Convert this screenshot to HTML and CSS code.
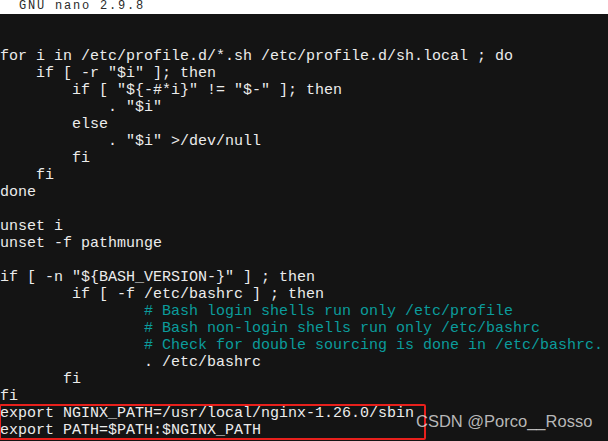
FILE: index.html
```html
<!DOCTYPE html>
<html lang="en">
<head>
    <meta charset="UTF-8">
    <title>GNU nano 2.9.8</title>
    <link rel="stylesheet" href="styles.css">
</head>
<body>

    <div class="terminal">
        <div class="titlebar">  GNU nano 2.9.8</div>

        <div class="buffer">
            <div class="ln">for i in /etc/profile.d/*.sh /etc/profile.d/sh.local ; do</div>
            <div class="ln">    if [ -r "$i" ]; then</div>
            <div class="ln">        if [ "${-#*i}" != "$-" ]; then</div>
            <div class="ln">            . "$i"</div>
            <div class="ln">        else</div>
            <div class="ln">            . "$i" &gt;/dev/null</div>
            <div class="ln">        fi</div>
            <div class="ln">    fi</div>
            <div class="ln">done</div>
            <div class="ln"></div>
            <div class="ln">unset i</div>
            <div class="ln">unset -f pathmunge</div>
            <div class="ln"></div>
            <div class="ln">if [ -n "${BASH_VERSION-}" ] ; then</div>
            <div class="ln">        if [ -f /etc/bashrc ] ; then</div>
            <div class="ln">                <span class="comment"># Bash login shells run only /etc/profile</span></div>
            <div class="ln">                <span class="comment"># Bash non-login shells run only /etc/bashrc</span></div>
            <div class="ln">                <span class="comment"># Check for double sourcing is done in /etc/bashrc.</span></div>
            <div class="ln">                . /etc/bashrc</div>
            <div class="ln">       fi</div>
            <div class="ln">fi</div>
            <div class="mark">
                <div class="ln">export NGINX_PATH=/usr/local/nginx-1.26.0/sbin</div>
                <div class="ln">export PATH=$PATH:$NGINX_PATH</div>
            </div>
        </div>

        <div class="watermark">CSDN @Porco__Rosso</div>
    </div>

</body>
</html>
```

FILE: styles.css
```css
html, body {
    margin: 0;
    padding: 0;
    background-color: #141414;
}
.terminal {
    position: relative;
    width: 608px;
    height: 441px;
    overflow: hidden;
    background-color: #141414;
    font-family: "Liberation Mono", "DejaVu Sans Mono", monospace;
}
.titlebar {
    height: 14px;
    line-height: 13px;
    padding-left: 1px;
    font-size: 12px;
    letter-spacing: 1.8px;
    background-color: #ffffff;
    color: #2a2a2a;
    white-space: pre;
}
.buffer {
    padding-top: 34px;
    font-size: 15px;
    color: #ececec;
}
.ln {
    height: 17px;
    line-height: 17px;
    white-space: pre;
}
.comment {
    color: #0b9c9c;
}
.mark {
    position: relative;
    width: 426px;
}
.mark::after {
    content: "";
    position: absolute;
    left: -1px;
    top: -1px;
    right: 0;
    bottom: -1px;
    border: 2px solid #e8201c;
    border-radius: 2px;
}
.watermark {
    position: absolute;
    left: 416px;
    top: 412px;
    font-family: "Liberation Sans", Arial, sans-serif;
    font-size: 16.5px;
    color: rgba(215, 215, 215, 0.85);
    white-space: nowrap;
}
```
